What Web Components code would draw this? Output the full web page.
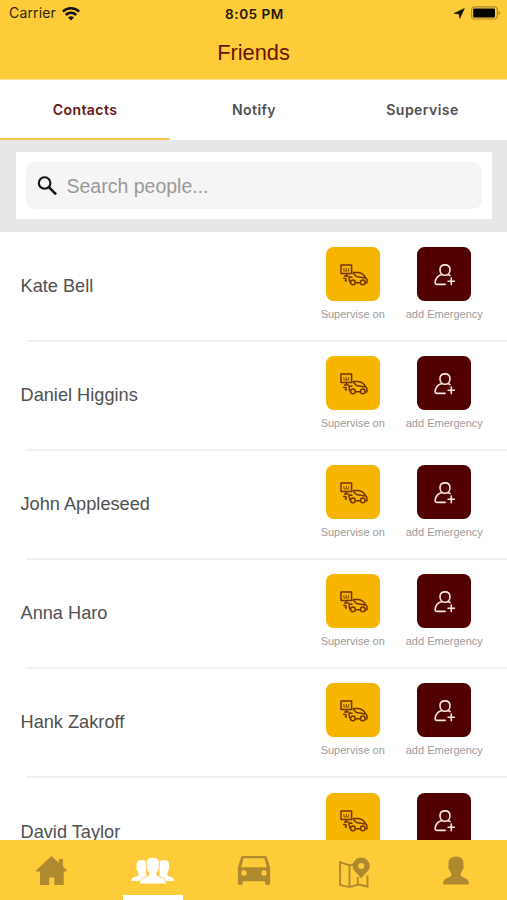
<!DOCTYPE html>
<html lang="en">
<head>
<meta charset="utf-8">
<title>Friends</title>
<style>
html,body{margin:0;height:100%;overflow:hidden;background:#fff;font-family:"Liberation Sans",Arial,sans-serif}
</style>
</head>
<body>
<friends-app></friends-app>
<script>
const define = (name, html) => customElements.define(name, class extends HTMLElement {
  constructor() {
    super();
    const t = document.createElement('template');
    t.innerHTML = typeof html === 'function' ? html(this) : html;
    this.attachShadow({mode: 'open'}).append(t.content.cloneNode(true));
  }
});

const icons = {
  wifi: ['62 5 18 15', `<g fill="none" stroke="#111" stroke-width="2.5"><path d="M62.9 10.6a11.6 11.6 0 0 1 16.2 0"/><path d="M65.8 14a7.4 7.4 0 0 1 10.4 0"/></g><path d="M71 19.6l-2.9-3a4.2 4.2 0 0 1 5.8 0z" fill="#111"/>`],
  arrow: ['452 7 12 12', `<path d="M463.4 8.4l-4.6 10-.8-4.5-5-.5z" fill="#111" stroke="#111" stroke-width=".5" stroke-linejoin="round"/>`],
  battery: ['470 5 31 16', `<rect x="471.6" y="6.8" width="25.8" height="12.2" rx="3.2" fill="none" stroke="#a98a30" stroke-width="1.2"/><rect x="473.2" y="8.6" width="21.8" height="8.8" rx="1.2" fill="#050500"/><path d="M498.6 10.8q3.2 2 0 4.4z" fill="#a98a30"/>`],
  search: ['37 175 21 21', `<g fill="none" stroke="#111" stroke-width="2.1"><circle cx="44.6" cy="183" r="5.8"/><path d="M48.6 186.9l7.5 7.4" stroke-width="2.5"/></g>`],
  supervise: ['338 261 30 26', `<g fill="none" stroke="#733500" stroke-width="1.5" stroke-linejoin="round"><rect x="341" y="265" width="10.6" height="8.4"/><path d="M346.4 273.5v2.6M344 276h4.8"/><path d="M343.9 268v2.6M346.3 267.8v2.8M348.7 268v2.6M343.5 270.9h5.6" stroke-width=".8"/><path d="M343 278.3h3M344.6 280.4h2.2M346 278v4" stroke-width="1.3"/><path d="M350.4 282.8c-1.5-1.8-1.3-4.8-1.1-5.9l3.2.3M352.8 272.6h5.3c3.5.2 6.1 2.6 7.7 5.2 1.3.9 1.5 3 1.1 5l-2 .1M352.8 272.8l3.6 3.8 8.8 1.3M355.4 282.8h5"/><circle cx="352.9" cy="282.4" r="2.3"/><circle cx="362.8" cy="282.4" r="2.3"/></g>`],
  add: ['433.5 261 22 26', `<g fill="none" stroke="#f6e7df" stroke-width="1.6" stroke-linecap="round" stroke-linejoin="round"><path d="M445.5 264.9c-3.1 0-5 2.1-5 4.8 0 3.1 2.1 5.6 5 5.6s5-2.5 5-5.6c0-2.7-1.9-4.8-5-4.8zM442.4 274.4c-4.6 1.3-6.6 4.1-6.8 8.4 0 1.1.6 1.6 1.6 1.6h8.4M448.6 274.5l2 1.1M451.8 278v6.6M448.6 281.3h6.4"/></g>`],
  home: ['35 855 33 32', `<path d="M51.5 856L67 870.4l-.8 1h-2.5V885h-9.3v-7.5h-5.2v7.5H40v-13.6h-3.5l-.6-1z" fill="#ae892d"/><path d="M58.8 859h4.1v8h-4.1z" fill="#ae892d"/>`],
  group: ['130 855 46 31', `<g fill="#fff"><path d="M141.5 860c-4.4 0-5.6 3-4.8 7-.9 2 .6 3 1.2 4.8.5 1.5.9 2.6.3 3.5-2 2.2-6.8 1.3-7 5.8h15v-19c-.8-1.3-2.4-2.1-4.7-2.1z"/><path d="M164.1 860c4.4 0 5.6 3 4.8 7 .9 2-.6 3-1.2 4.8-.5 1.5-.9 2.6-.3 3.5 2 2.2 6.8 1.3 7 5.8h-15v-19c.8-1.3 2.4-2.1 4.7-2.1z"/><path d="M152.8 857.2c-5.9 0-7.2 3.9-6.3 8.6-1.1 2.3.6 3.2 1.2 4.8.6 1.8 1.6 2.6 1 4.4-2 2.8-9.2 1.7-9.4 9h27c-.2-7.3-7.4-6.2-9.4-9-.6-1.8.4-2.6 1-4.4.6-1.6 2.3-2.5 1.2-4.8.9-4.7-.4-8.6-6.3-8.6z" stroke="#ffcc39" stroke-width=".9"/></g>`],
  car: ['237 855 34 31', `<path fill="#ae892d" fill-rule="evenodd" d="M242.8 856h22.4q1.4 0 1.9 1.5l3 10.2V883q0 2-1.8 2h-1.5q-1.7 0-1.7-2v-1.8h-22.3v1.8q0 2-1.7 2h-1.4q-1.8 0-1.8-2v-15.3l3-10.2q.5-1.5 1.9-1.5zm.8 2.2l-2.5 9h25.8l-2.5-9zm.4 12.1a2.7 2.7 0 1 0 0 5.4 2.7 2.7 0 0 0 0-5.4zm20 0a2.7 2.7 0 1 0 0 5.4 2.7 2.7 0 0 0 0-5.4z"/>`],
  map: ['338 857 34 32', `<g fill="none" stroke="#ae892d" stroke-width="1.9"><path d="M353.5 864.3l-4 1.1-9.4-3.2v22.9l9.4 2 9-2.5 9 1.9V875.5M349.5 865.4v21.5M357.8 877v7.4"/></g><path fill="#ae892d" fill-rule="evenodd" d="M361.2 857.6a8.6 8.6 0 0 0-8.6 8.5c0 5 5.4 7.7 8.6 12.4 3.2-4.7 8.6-7.4 8.6-12.4a8.6 8.6 0 0 0-8.6-8.5zm0 5.5a3 3 0 1 1 0 6 3 3 0 0 1 0-6z"/>`],
  person: ['442 855 28 31', `<path fill="#ae892d" d="M456 856.6c-6.2 0-8.3 3.6-7.3 9-1.3 2.4.4 3.4 1.1 5.2.7 1.8 2 2.4 1.6 4.6-2.4 3.4-8.4 1.4-8.4 9.1h26c0-7.7-6-5.7-8.4-9.1-.4-2.2.9-2.8 1.6-4.6.7-1.8 2.4-2.8 1.1-5.2 1-5.4-1.1-9-7.3-9z"/>`]
};

define('ui-icon', el => {
  const [box, art] = icons[el.getAttribute('name')];
  const [, , w, h] = box.split(' ');
  return `<style>:host{display:block;flex:none;width:${w}px;height:${h}px}svg{display:block}</style><svg width="${w}" height="${h}" viewBox="${box}">${art}</svg>`;
});

define('status-bar', `<style>
:host{display:grid;grid-template-columns:1fr auto 1fr;align-items:center;height:27px;padding:0 6px 0 9px;font:400 14px/28px Inter,sans-serif;color:#2b260f}
div{display:flex;align-items:center}.l{gap:6px;height:26px;align-self:start}.r{justify-content:flex-end;gap:5.5px;height:26px;align-self:start}
b{font-weight:600;color:#1c1806;font-size:13.6px;line-height:28px;letter-spacing:.5px;margin-right:1px}span{letter-spacing:.15px}
</style><div class="l"><span>Carrier</span><ui-icon name="wifi"></ui-icon></div><b>8:05 PM</b><div class="r"><ui-icon name="arrow"></ui-icon><ui-icon name="battery"></ui-icon></div>`);

define('nav-header', `<style>
:host{display:block;flex:none;height:79px;background:#ffcc39;border-bottom:1px solid #fbe3a0}
h1{margin:0;font:400 21.8px/51px "Liberation Sans",Arial,sans-serif;color:#661300;text-align:center}
</style><status-bar></status-bar><h1><slot></slot></h1>`);

define('tab-item', `<style>
:host{box-sizing:border-box;display:block;height:60px;border-bottom:2.5px solid transparent;text-align:center;font:600 14.1px/60px Inter,sans-serif;letter-spacing:.4px;color:#505050}
:host([active]){color:#651616;border-color:#fbcb45}
</style><slot></slot>`);

define('tab-bar', `<style>:host{display:grid;flex:none;grid-template-columns:170px 168px 169px;background:#fff}</style><slot></slot>`);

define('search-box', `<style>
:host{display:block;flex:none;padding:12px 15px 13px 15.5px;background:#e7e7e7}
.card{background:#fff;padding:10px}
.field{display:flex;align-items:center;height:47px;border-radius:9px;background:#f5f5f5;padding-left:11.5px;gap:8.5px;font-size:19.5px;line-height:48px;color:#999}
</style><div class="card"><div class="field"><ui-icon name="search"></ui-icon><span><slot></slot></span></div></div>`);

define('action-button', `<style>
:host{display:flex;flex-direction:column;align-items:center;width:91.5px;font-size:11px;line-height:14px;color:#9b9b9b;white-space:nowrap}
.tile{display:flex;align-items:center;justify-content:center;width:54px;height:54px;border-radius:7.5px;margin-bottom:6px;background:var(--tile)}
</style><div class="tile"><slot name="icon"></slot></div><slot></slot>`);

define('contact-row', el => {
  const label = t => el.hasAttribute('compact') ? '' : t;
  return `<style>
:host{display:block;height:109.1px}
.row{display:flex;align-items:flex-start;height:108.1px;padding:15.1px 17px 0 20.5px;box-sizing:border-box}
.name{flex:1;font-size:18.2px;line-height:79.2px;color:#505050}
.line{height:2px;margin-left:26px;background:#f1f1f1}
</style><div class="row"><div class="name"><slot></slot></div>
<action-button style="--tile:#f7b500"><ui-icon slot="icon" name="supervise"></ui-icon>${label('Supervise on')}</action-button>
<action-button style="--tile:#510000"><ui-icon slot="icon" name="add"></ui-icon>${label('add Emergency')}</action-button></div><div class="line"></div>`;
});

define('bottom-item', `<style>
:host{box-sizing:border-box;display:flex;justify-content:center;align-items:flex-start;padding-top:15px;height:60px}
:host([active]){background:linear-gradient(#fff,#fff) center bottom/60px 5px no-repeat}
</style><slot></slot>`);

define('bottom-bar', `<style>
:host{display:grid;flex:none;grid-template-columns:repeat(5,101px);justify-content:center;height:60px;background:#ffcc39}
.map{padding-top:17px}
</style>
<bottom-item><ui-icon name="home"></ui-icon></bottom-item>
<bottom-item active><ui-icon name="group"></ui-icon></bottom-item>
<bottom-item><ui-icon name="car"></ui-icon></bottom-item>
<bottom-item class="map"><ui-icon name="map"></ui-icon></bottom-item>
<bottom-item><ui-icon name="person"></ui-icon></bottom-item>`);

define('friends-app', `<style>
:host{display:flex;flex-direction:column;width:507px;height:900px;overflow:hidden}
main{flex:1;min-height:0;overflow:hidden}
</style>
<nav-header>Friends</nav-header>
<tab-bar><tab-item active>Contacts</tab-item><tab-item>Notify</tab-item><tab-item>Supervise</tab-item></tab-bar>
<search-box>Search people...</search-box>
<main>${['Kate Bell', 'Daniel Higgins', 'John Appleseed', 'Anna Haro', 'Hank Zakroff', 'David Taylor'].map((n, i) => `<contact-row${i === 5 ? ' compact' : ''}>${n}</contact-row>`).join('')}</main>
<bottom-bar></bottom-bar>`);
</script>
</body>
</html>
